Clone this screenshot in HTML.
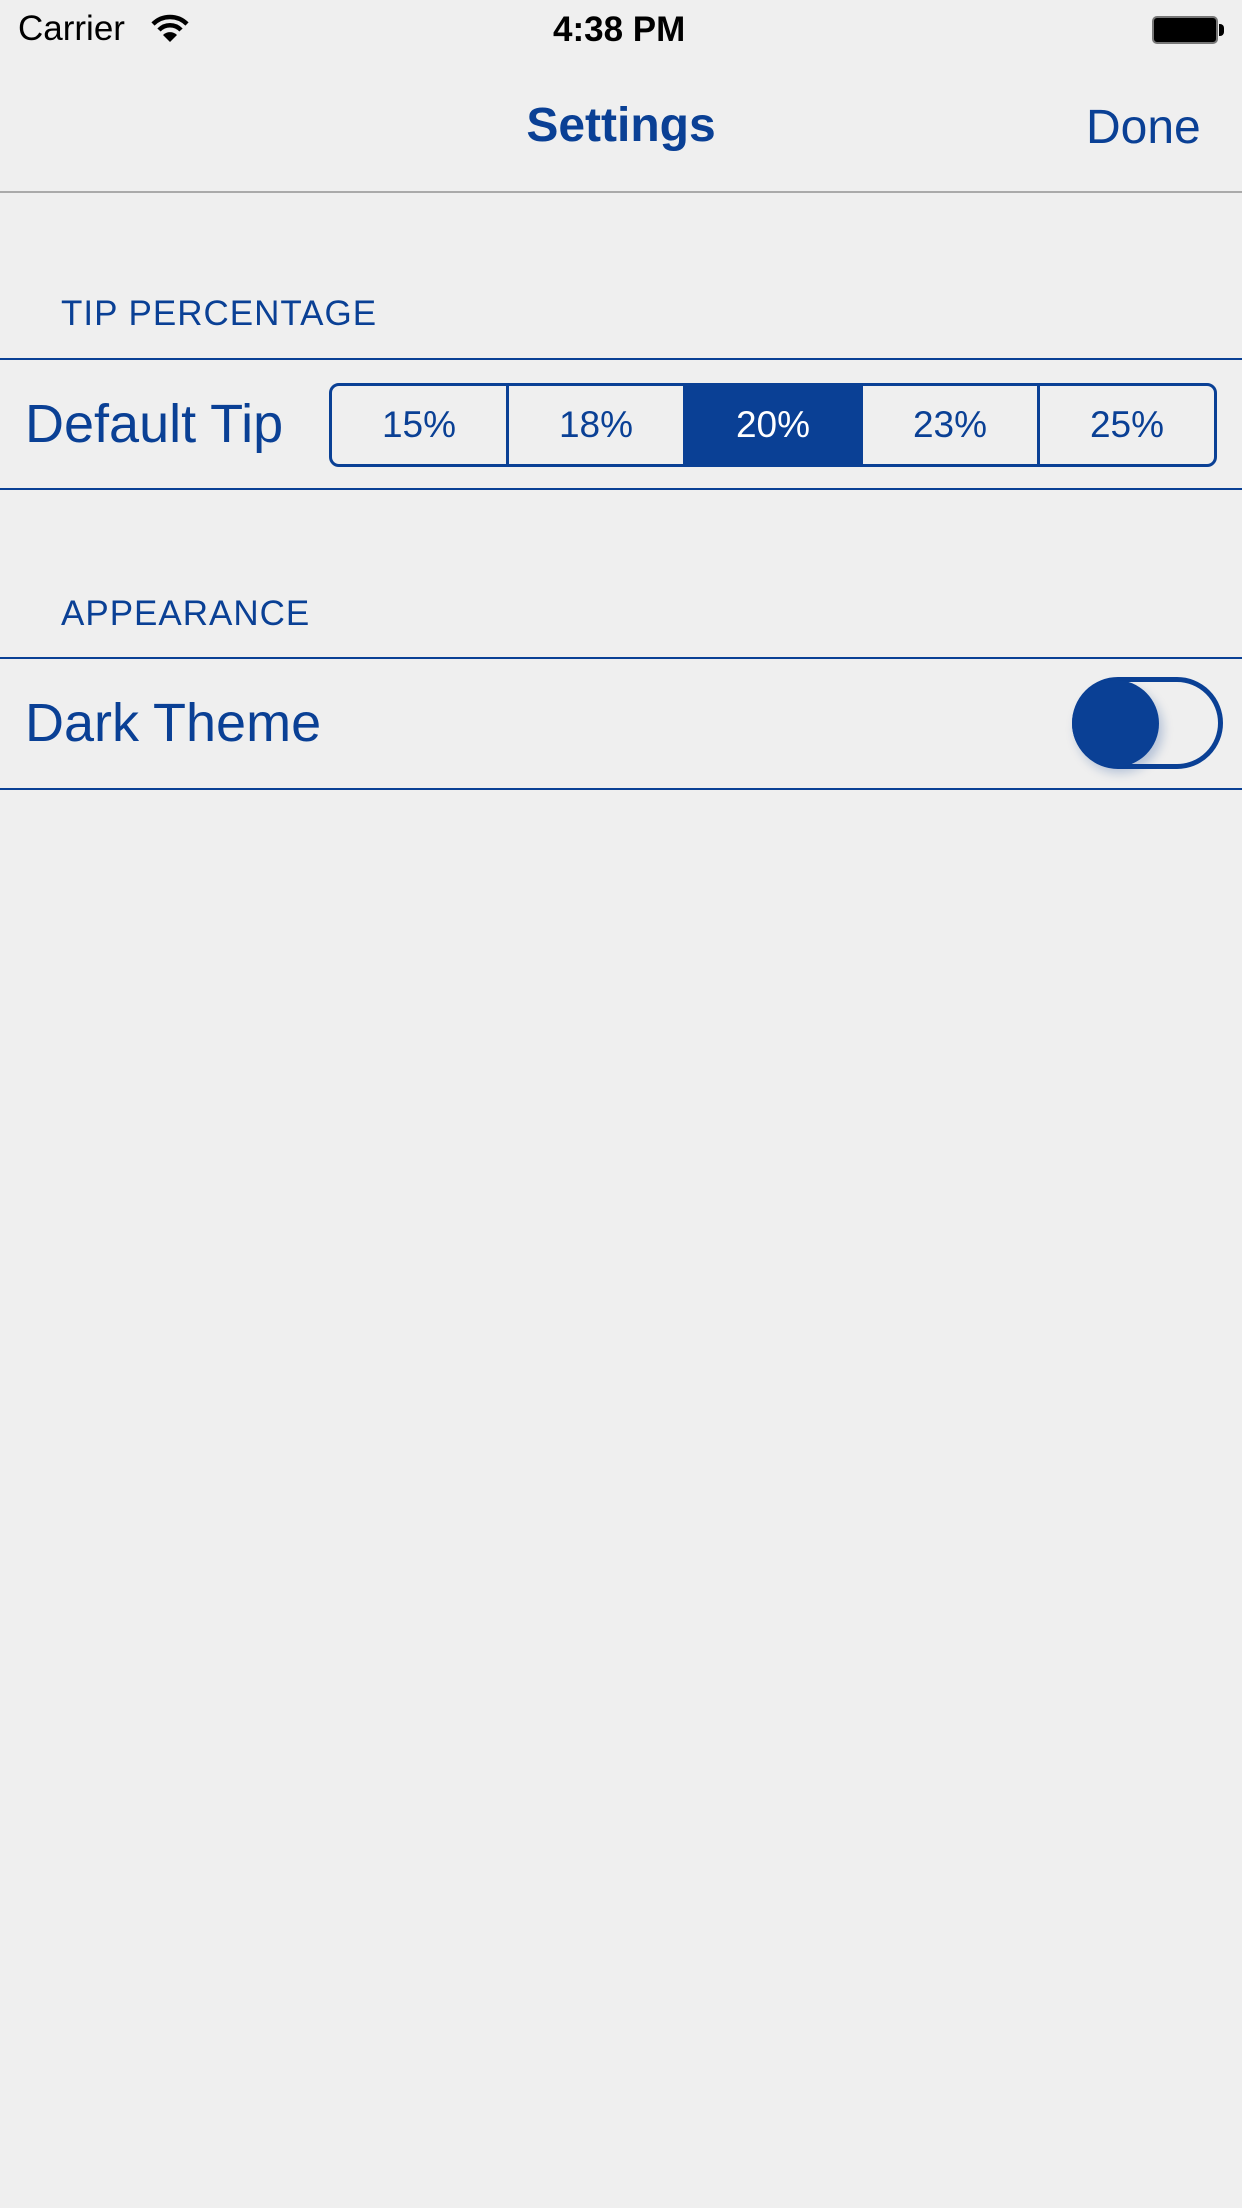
<!DOCTYPE html>
<html><head><meta charset="utf-8"><style>
*{margin:0;padding:0;box-sizing:border-box}
body{width:1242px;height:2208px;background:#efefef;font-family:"Liberation Sans",sans-serif;position:relative;overflow:hidden;color:#0a4095}
.a{position:absolute;white-space:nowrap}
.line{position:absolute;left:0;width:1242px;height:2px;background:#0a4095}
.seg{position:absolute;left:329px;top:383px;width:888px;height:84px;border:3px solid #0a4095;border-radius:10px;display:flex;overflow:hidden}
.seg div{flex:1;display:flex;align-items:center;justify-content:center;font-size:37px;border-right:3px solid #0a4095}
.seg div:last-child{border-right:none}
.seg .on{background:#0a4095;color:#fff}
</style></head><body>
<div class="a" style="left:18px;top:9px;font-size:35px;color:#000">Carrier</div>
<svg class="a" style="left:150px;top:14px" width="40" height="30" viewBox="0 0 40 30"><path d="M3 10 A24 24 0 0 1 37 10" stroke="#000" stroke-width="4.5" fill="none"/><path d="M9 16 A15 15 0 0 1 31 16" stroke="#000" stroke-width="4.5" fill="none"/><path d="M20 28 L13 21 A10 10 0 0 1 27 21 Z" fill="#000"/></svg>
<div class="a" style="left:553px;top:10px;font-size:35px;font-weight:bold;color:#000">4:38 PM</div>
<div class="a" style="left:1152px;top:16px;width:66px;height:28px;background:#000;border:2px solid #777;border-radius:5px"></div>
<div class="a" style="left:1219px;top:24px;width:5px;height:12px;background:#000;border-radius:0 4px 4px 0"></div>
<div class="a" style="left:0;width:1242px;top:98px;text-align:center;font-size:48px;font-weight:bold">Settings</div>
<div class="a" style="left:1086px;top:100px;font-size:48px">Done</div>
<div class="line" style="top:191px;background:#aaa"></div>
<div class="a" style="left:61px;top:294px;font-size:35px;letter-spacing:1px">TIP PERCENTAGE</div>
<div class="line" style="top:358px"></div>
<div class="a" style="left:25px;top:393px;font-size:54px">Default Tip</div>
<div class="seg"><div>15%</div><div>18%</div><div class="on">20%</div><div>23%</div><div>25%</div></div>
<div class="line" style="top:488px"></div>
<div class="a" style="left:61px;top:594px;font-size:35px;letter-spacing:1px">APPEARANCE</div>
<div class="line" style="top:657px"></div>
<div class="a" style="left:25px;top:692px;font-size:54px">Dark Theme</div>
<div class="a" style="left:1072px;top:677px;width:151px;height:92px;border:5px solid #0a4095;border-radius:46px"></div>
<div class="a" style="left:1072px;top:680px;width:87px;height:87px;background:#0a4095;border-radius:50%;box-shadow:4px 6px 10px rgba(10,64,149,.25)"></div>
<div class="line" style="top:788px"></div>
</body></html>
